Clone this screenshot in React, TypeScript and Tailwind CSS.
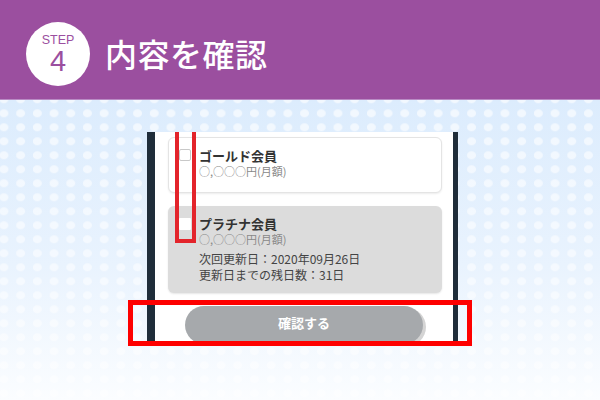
import React from "react";

const jp = { fontFamily: '"Noto Sans CJK JP", "Noto Sans", sans-serif' };

function DotBackground() {
  return (
    <svg className="absolute inset-0" width="600" height="300" viewBox="0 0 600 300">
      <defs>
        <linearGradient id="bgGrad" x1="0" y1="0" x2="0" y2="1">
          <stop offset="0" stopColor="#dcecfd" />
          <stop offset="0.55" stopColor="#e9f3fe" />
          <stop offset="1" stopColor="#fbfdff" />
        </linearGradient>
        <pattern id="dots" x="-0.45" y="-4.7" width="16.7" height="14" patternUnits="userSpaceOnUse">
          <ellipse cx="4.35" cy="4" rx="4.6" ry="4" fill="#ffffff" />
        </pattern>
        <linearGradient id="fadeGrad" x1="0" y1="0" x2="0" y2="1">
          <stop offset="0" stopColor="#fff" stopOpacity="0.62" />
          <stop offset="1" stopColor="#fff" stopOpacity="0.45" />
        </linearGradient>
        <mask id="fadeMask">
          <rect width="600" height="300" fill="url(#fadeGrad)" />
        </mask>
      </defs>
      <rect width="600" height="300" fill="url(#bgGrad)" />
      <rect width="600" height="300" fill="url(#dots)" mask="url(#fadeMask)" />
    </svg>
  );
}

function Checkbox() {
  return <div className="w-[12px] h-[12px] bg-white border border-[#c8c8c8] rounded-[2px] shrink-0" />;
}

export default function App() {
  return (
    <div className="w-[600px] h-[400px] relative overflow-hidden bg-white" style={jp}>
      <header className="h-[100px] bg-[#9b4f9f] border-b border-[#b98bc4] flex items-start pt-[22px] pl-[26px]">
        <div className="w-[64px] h-[64px] rounded-full bg-white flex flex-col items-center justify-center text-[#9b4f9f] shrink-0" style={{ fontFamily: '"Liberation Sans", Arial, sans-serif' }}>
          <span className="text-[12.5px] leading-[13px] mt-[1px]">STEP</span>
          <span className="text-[29px] leading-[28px]">4</span>
        </div>
        <h1 className="ml-[15px] mt-[11px] text-white text-[32px] leading-[40px] font-medium tracking-[0.5px]">内容を確認</h1>
      </header>

      <main className="relative h-[300px]">
        <DotBackground />
        <div className="relative pt-[32px] pl-[147px]">
          <div className="w-[311px] h-[211px] border-l-[8px] border-r-[5px] border-[#1f2d3a] bg-white overflow-hidden pt-[5px] pl-[13px] pr-[11px]">
            <div className="h-[56px] rounded-[6px] border border-[#e4e4e4] bg-white shadow-[0_1px_2px_rgba(0,0,0,0.08)] flex items-start pl-[10px] pt-[11px]">
              <Checkbox />
              <div className="ml-[8px] -mt-[1px]">
                <div className="text-[13px] leading-[16px] font-bold text-[#333]">ゴールド会員</div>
                <div className="text-[11px] leading-[15px] text-[#888]">○,○○○円(月額)</div>
              </div>
            </div>
            <div className="mt-[13px] h-[87px] rounded-[6px] bg-[#dcdcdc] shadow-[0_1px_2px_rgba(0,0,0,0.1)] flex items-start pl-[11px] pt-[12px]">
              <div className="w-[12px] h-[12px] bg-white rounded-[1px] shrink-0" />
              <div className="ml-[8px] -mt-[2px]">
                <div className="text-[13px] leading-[16px] font-bold text-[#333]">プラチナ会員</div>
                <div className="text-[11px] leading-[15px] text-[#888]">○,○○○円(月額)</div>
                <div className="mt-[4px] text-[12px] leading-[16px] text-[#444]">次回更新日：2020年09月26日</div>
                <div className="text-[12px] leading-[16px] text-[#444]">更新日までの残日数：31日</div>
              </div>
            </div>
            <div className="mt-[13px] flex justify-center pr-[2px]">
              <button className="w-[238px] h-[38px] rounded-full bg-[#a6a9ac] shadow-[3px_2px_0_#d4d4d4] text-white text-[13px] font-bold leading-[34px] pb-[4px]">
                確認する
              </button>
            </div>
          </div>
        </div>
      </main>

      <div className="absolute left-[175px] top-[132px] w-[21px] h-[111px] border-[4px] border-t-0 border-[#e3242b]" />
      <div className="absolute left-[128px] top-[300px] w-[344px] h-[46px] border-[5px] border-[#fe0000]" />
    </div>
  );
}
